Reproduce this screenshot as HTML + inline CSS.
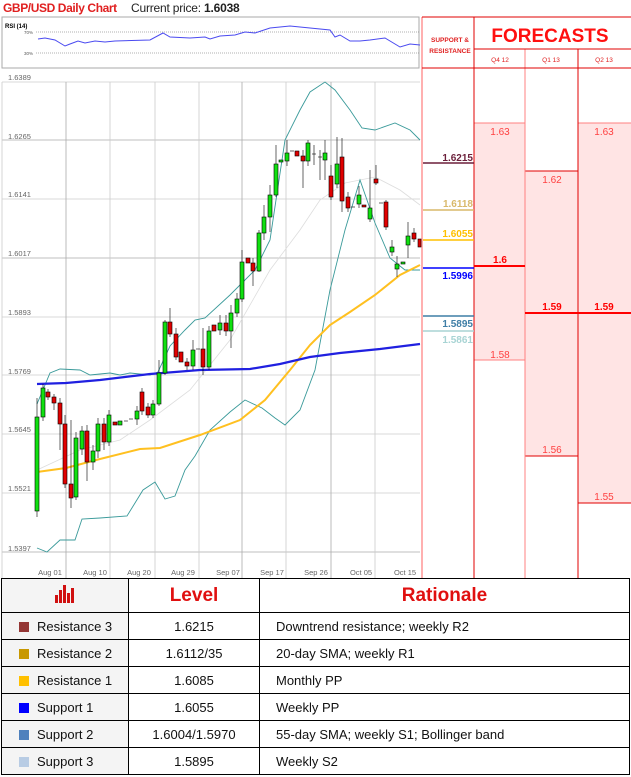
<!DOCTYPE html><html><head><meta charset="utf-8"><style>
body{margin:0;width:631px;height:777px;background:#fff;font-family:"Liberation Sans",sans-serif;overflow:hidden;position:relative}
.t{position:absolute;white-space:nowrap}
table{position:absolute;left:1px;top:578px;border-collapse:collapse;width:629px}
td{border:1.5px solid #000;font-size:13px;color:#111;height:26px;padding:0}
.sq{display:inline-block;width:10px;height:10px;margin:0 8px 0 17px;vertical-align:-1px}
.h{font-weight:bold;color:#e01010;font-size:19px;text-align:center}
</style></head><body>
<div class="t" style="left:3px;top:1px;font-size:12px;font-weight:bold;color:#e02020;letter-spacing:-0.4px">GBP/USD Daily Chart</div>
<div class="t" style="left:131px;top:1px;font-size:12px;color:#222;letter-spacing:-0.2px">Current price: <b>1.6038</b></div>
<svg width="631" height="578" style="position:absolute;left:0;top:0" font-family="Liberation Sans">
<rect x="2" y="17" width="417" height="51" fill="#fff" stroke="#aaa"/>
<text x="5" y="28" font-size="6" font-weight="bold">RSI (14)</text>
<text x="24" y="34" font-size="4.5" fill="#555">70%</text><text x="24" y="55" font-size="4.5" fill="#555">30%</text>
<line x1="36" y1="32" x2="419" y2="32" stroke="#666" stroke-dasharray="1,1" stroke-width="0.6"/>
<line x1="36" y1="53" x2="419" y2="53" stroke="#666" stroke-dasharray="1,1" stroke-width="0.6"/>
<polyline fill="none" stroke="#4a4af0" stroke-width="1" points="38,39 45,38 55,40 65,46 70,44 78,41 85,43 95,41 105,42 115,41 150,40 163,33 170,37 190,38 205,37 210,39 220,36 235,35 245,32 255,33 270,28 290,26 310,28 330,30 335,37 340,35 350,41 360,41 370,40 385,38 400,47 410,44 420,45"/>
<g font-size="7.5" fill="#666">
<text x="8" y="80">1.6389</text><text x="8" y="139">1.6265</text><text x="8" y="197">1.6141</text><text x="8" y="256">1.6017</text><text x="8" y="315">1.5893</text><text x="8" y="374">1.5769</text><text x="8" y="432">1.5645</text><text x="8" y="491">1.5521</text><text x="8" y="551">1.5397</text>
</g>
<g stroke="#ccc" stroke-width="0.8">
<line x1="2" y1="82" x2="420" y2="82"/><line x1="2" y1="140" x2="420" y2="140" stroke="#aaa"/><line x1="2" y1="199" x2="420" y2="199"/><line x1="2" y1="258" x2="420" y2="258" stroke="#aaa"/><line x1="2" y1="317" x2="420" y2="317"/><line x1="2" y1="375" x2="420" y2="375"/><line x1="2" y1="434" x2="420" y2="434"/><line x1="2" y1="493" x2="420" y2="493"/><line x1="2" y1="552" x2="420" y2="552" stroke="#aaa"/>
<line x1="66" y1="82" x2="66" y2="578" stroke="#aaa"/><line x1="110" y1="82" x2="110" y2="578"/><line x1="155" y1="82" x2="155" y2="578"/><line x1="199" y1="82" x2="199" y2="578"/><line x1="242" y1="82" x2="242" y2="578" stroke="#aaa"/><line x1="286" y1="82" x2="286" y2="578"/><line x1="331" y1="82" x2="331" y2="578" stroke="#aaa"/><line x1="375" y1="82" x2="375" y2="578"/>
<line x1="2" y1="82" x2="2" y2="578"/>
</g>
<g font-size="7.5" fill="#666" text-anchor="middle">
<text x="50" y="575">Aug 01</text><text x="95" y="575">Aug 10</text><text x="139" y="575">Aug 20</text><text x="183" y="575">Aug 29</text><text x="228" y="575">Sep 07</text><text x="272" y="575">Sep 17</text><text x="316" y="575">Sep 26</text><text x="361" y="575">Oct 05</text><text x="405" y="575">Oct 15</text>
</g>
<polyline fill="none" stroke="#ddd" stroke-width="0.8" points="37,470 80,450 120,440 150,420 190,390 230,340 270,270 300,230 320,200 345,183 375,177 400,190 420,205"/>
<polyline fill="none" stroke="#3a9a9a" stroke-width="0.9" points="37,404 50,373 60,369 80,370 90,375 110,373 120,375 130,373 150,375 158,372 170,346 185,330 195,320 205,318 230,295 255,270 270,240 285,140 300,110 310,92 325,82 335,90 350,110 362,128 375,130 395,123 410,130 420,140"/>
<polyline fill="none" stroke="#3a9a9a" stroke-width="0.9" points="37,548 47,552 60,540 75,540 82,519 100,518 127,516 143,490 155,482 165,499 175,496 185,470 195,456 210,430 230,412 245,400 262,408 275,418 285,425 300,410 315,370 330,290 345,230 360,180 375,223 390,258 405,270 420,270"/>
<polyline fill="none" stroke="#ffc020" stroke-width="2" points="37,472 66,468 100,459 140,449 160,448 200,435 240,420 265,400 290,370 310,345 330,325 350,312 375,295 400,275 420,265"/>
<polyline fill="none" stroke="#2020e0" stroke-width="2.2" points="37,384 66,383 100,380 150,374 200,370 250,369 280,364 310,357 340,353 380,349 420,344"/>
<g stroke="#000" stroke-width="0.6">
<g fill="#10e010">
<line x1="37" y1="398" x2="37" y2="517"/><rect x="35" y="417" width="4" height="94"/>
<line x1="43" y1="384" x2="43" y2="421"/><rect x="41" y="388" width="4" height="29"/>
<line x1="76" y1="432" x2="76" y2="500"/><rect x="74" y="438" width="4" height="59"/>
<line x1="82" y1="426" x2="82" y2="455"/><rect x="80" y="431" width="4" height="18"/>
<line x1="93" y1="445" x2="93" y2="470"/><rect x="91" y="451" width="4" height="11"/>
<line x1="98" y1="418" x2="98" y2="458"/><rect x="96" y="424" width="4" height="27"/>
<line x1="109" y1="410" x2="109" y2="446"/><rect x="107" y="415" width="4" height="27"/>
<rect x="118" y="421" width="4" height="4"/>
<line x1="137" y1="406" x2="137" y2="425"/><rect x="135" y="411" width="4" height="8"/>
<line x1="153" y1="400" x2="153" y2="418"/><rect x="151" y="404" width="4" height="11"/>
<line x1="159" y1="360" x2="159" y2="406"/><rect x="157" y="373" width="4" height="31"/>
<line x1="165" y1="320" x2="165" y2="375"/><rect x="163" y="322" width="4" height="51"/>
<line x1="193" y1="340" x2="193" y2="370"/><rect x="191" y="350" width="4" height="16"/>
<line x1="209" y1="326" x2="209" y2="370"/><rect x="207" y="331" width="4" height="36"/>
<line x1="220" y1="315" x2="220" y2="335"/><rect x="218" y="323" width="4" height="7"/>
<line x1="231" y1="305" x2="231" y2="348"/><rect x="229" y="313" width="4" height="18"/>
<line x1="237" y1="293" x2="237" y2="317"/><rect x="235" y="299" width="4" height="14"/>
<line x1="242" y1="250" x2="242" y2="302"/><rect x="240" y="262" width="4" height="37"/>
<line x1="259" y1="230" x2="259" y2="272"/><rect x="257" y="233" width="4" height="38"/>
<line x1="264" y1="205" x2="264" y2="240"/><rect x="262" y="217" width="4" height="16"/>
<line x1="270" y1="185" x2="270" y2="232"/><rect x="268" y="195" width="4" height="22"/>
<line x1="276" y1="145" x2="276" y2="197"/><rect x="274" y="164" width="4" height="31"/>
<rect x="279" y="160" width="4" height="2"/>
<line x1="287" y1="140" x2="287" y2="166"/><rect x="285" y="153" width="4" height="8"/>
<line x1="308" y1="140" x2="308" y2="166"/><rect x="306" y="143" width="4" height="18"/>
<line x1="325" y1="140" x2="325" y2="180"/><rect x="323" y="153" width="4" height="7"/>
<line x1="337" y1="137" x2="337" y2="188"/><rect x="335" y="164" width="4" height="20"/>
<line x1="359" y1="186" x2="359" y2="208"/><rect x="357" y="195" width="4" height="9"/>
<line x1="370" y1="170" x2="370" y2="222"/><rect x="368" y="208" width="4" height="11"/>
<line x1="392" y1="240" x2="392" y2="256"/><rect x="390" y="247" width="4" height="5"/>
<line x1="397" y1="256" x2="397" y2="277"/><rect x="395" y="264" width="4" height="5"/>
<rect x="401" y="262" width="4" height="2"/>
<line x1="408" y1="222" x2="408" y2="258"/><rect x="406" y="236" width="4" height="9"/>
</g>
<g fill="#e00000">
<line x1="48" y1="389" x2="48" y2="400"/><rect x="46" y="392" width="4" height="5"/>
<line x1="54" y1="394" x2="54" y2="410"/><rect x="52" y="397" width="4" height="6"/>
<line x1="60" y1="398" x2="60" y2="450"/><rect x="58" y="403" width="4" height="21"/>
<line x1="65" y1="415" x2="65" y2="488"/><rect x="63" y="424" width="4" height="60"/>
<line x1="71" y1="420" x2="71" y2="508"/><rect x="69" y="484" width="4" height="14"/>
<line x1="87" y1="425" x2="87" y2="481"/><rect x="85" y="431" width="4" height="31"/>
<line x1="104" y1="418" x2="104" y2="450"/><rect x="102" y="424" width="4" height="18"/>
<rect x="113" y="422" width="4" height="3"/>
<line x1="142" y1="388" x2="142" y2="415"/><rect x="140" y="392" width="4" height="19"/>
<line x1="148" y1="403" x2="148" y2="418"/><rect x="146" y="407" width="4" height="8"/>
<line x1="170" y1="308" x2="170" y2="337"/><rect x="168" y="322" width="4" height="12"/>
<line x1="176" y1="328" x2="176" y2="360"/><rect x="174" y="334" width="4" height="23"/>
<rect x="179" y="352" width="4" height="10"/>
<line x1="187" y1="358" x2="187" y2="370"/><rect x="185" y="362" width="4" height="4"/>
<line x1="203" y1="328" x2="203" y2="375"/><rect x="201" y="349" width="4" height="18"/>
<rect x="212" y="325" width="4" height="6"/>
<line x1="226" y1="315" x2="226" y2="336"/><rect x="224" y="323" width="4" height="8"/>
<rect x="246" y="258" width="4" height="5"/>
<line x1="253" y1="258" x2="253" y2="286"/><rect x="251" y="263" width="4" height="8"/>
<rect x="295" y="151" width="4" height="5"/>
<line x1="303" y1="150" x2="303" y2="188"/><rect x="301" y="156" width="4" height="5"/>
<line x1="331" y1="165" x2="331" y2="200"/><rect x="329" y="176" width="4" height="21"/>
<line x1="342" y1="138" x2="342" y2="212"/><rect x="340" y="157" width="4" height="44"/>
<line x1="348" y1="192" x2="348" y2="212"/><rect x="346" y="197" width="4" height="11"/>
<rect x="362" y="205" width="4" height="2"/>
<line x1="376" y1="165" x2="376" y2="185"/><rect x="374" y="179" width="4" height="4"/>
<line x1="386" y1="200" x2="386" y2="230"/><rect x="384" y="202" width="4" height="25"/>
<line x1="414" y1="228" x2="414" y2="242"/><rect x="412" y="233" width="4" height="6"/>
<rect x="418" y="239" width="3" height="8"/>
</g>
<g><line x1="124" y1="421" x2="128" y2="421"/><line x1="129" y1="419" x2="133" y2="419"/><line x1="196" y1="349" x2="200" y2="349"/><line x1="290" y1="151" x2="294" y2="151"/><line x1="312" y1="154" x2="316" y2="154"/><line x1="318" y1="157" x2="322" y2="157"/><line x1="351" y1="207" x2="355" y2="207"/><line x1="379" y1="203" x2="383" y2="203"/><line x1="314" y1="145" x2="314" y2="165"/><line x1="320" y1="150" x2="320" y2="180"/></g>
</g>
<rect x="474" y="123" width="51" height="237" fill="#ffe4e4"/>
<rect x="525" y="171" width="53" height="285" fill="#ffe4e4"/>
<rect x="578" y="123" width="53" height="380" fill="#ffe4e4"/>
<g stroke="#ff8080" stroke-width="1">
<line x1="474" y1="123" x2="525" y2="123"/><line x1="474" y1="360" x2="525" y2="360"/><line x1="578" y1="123" x2="631" y2="123"/>
</g>
<g stroke="#e00000" stroke-width="1">
<line x1="525" y1="171" x2="578" y2="171"/><line x1="525" y1="456" x2="578" y2="456"/><line x1="578" y1="503" x2="631" y2="503"/>
<line x1="422" y1="17" x2="422" y2="578" stroke="#ff6060"/>
<line x1="422" y1="17" x2="631" y2="17"/>
<line x1="474" y1="17" x2="474" y2="578"/><line x1="525" y1="49" x2="525" y2="578" stroke="#ff8080"/><line x1="578" y1="49" x2="578" y2="578"/>
<line x1="474" y1="49" x2="631" y2="49"/><line x1="422" y1="68" x2="631" y2="68"/>
</g>
<line x1="474" y1="266" x2="525" y2="266" stroke="#ff0000" stroke-width="2"/>
<line x1="525" y1="313" x2="631" y2="313" stroke="#ff0000" stroke-width="2"/>
<text x="450" y="42" font-size="6.5" font-weight="bold" fill="#e02020" text-anchor="middle">SUPPORT &amp;</text>
<text x="450" y="53" font-size="6.5" font-weight="bold" fill="#e02020" text-anchor="middle">RESISTANCE</text>
<text x="550" y="42" font-size="19" font-weight="bold" fill="#ff1010" text-anchor="middle">FORECASTS</text>
<g font-size="6.5" fill="#e02020" text-anchor="middle"><text x="500" y="62">Q4 12</text><text x="551" y="62">Q1 13</text><text x="604" y="62">Q2 13</text></g>
<g font-size="10" fill="#ff4040" text-anchor="middle">
<text x="500" y="135">1.63</text><text x="604" y="135">1.63</text><text x="552" y="183">1.62</text><text x="500" y="358">1.58</text><text x="552" y="453">1.56</text><text x="604" y="500">1.55</text>
</g>
<g font-size="10" font-weight="bold" fill="#ff0000" text-anchor="middle"><text x="500" y="263">1.6</text><text x="552" y="310">1.59</text><text x="604" y="310">1.59</text></g>
<line x1="423" y1="163" x2="474" y2="163" stroke="#6b1f3a" stroke-width="1.5"/>
<line x1="423" y1="210" x2="474" y2="210" stroke="#d9b96a" stroke-width="1.5"/>
<line x1="423" y1="240" x2="474" y2="240" stroke="#ffc000" stroke-width="1.5"/>
<line x1="423" y1="268" x2="474" y2="268" stroke="#0000ff" stroke-width="1.5"/>
<line x1="423" y1="316" x2="474" y2="316" stroke="#3f7ea6" stroke-width="1.5"/>
<line x1="423" y1="331" x2="474" y2="331" stroke="#a8d4d4" stroke-width="1.5"/>
<g font-size="10" font-weight="bold" text-anchor="end">
<text x="473" y="161" fill="#6b1f3a">1.6215</text><text x="473" y="207" fill="#d9b96a">1.6118</text><text x="473" y="237" fill="#ffc000">1.6055</text><text x="473" y="279" fill="#0000ff">1.5996</text><text x="473" y="327" fill="#3f7ea6">1.5895</text><text x="473" y="343" fill="#a8d4d4">1.5861</text>
</g>
</svg>
<table>
<tr style="height:34px"><td style="width:126px;text-align:center;background:#f4f4f4"><svg width="22" height="18" viewBox="0 0 22 18"><g fill="#d01010"><rect x="1" y="10" width="3" height="8"/><rect x="5" y="5" width="3" height="13"/><rect x="9" y="0" width="3" height="18"/><rect x="13" y="8" width="3" height="10"/><rect x="17" y="3" width="3" height="15"/></g></svg></td><td class="h" style="width:130px">Level</td><td class="h">Rationale</td></tr>
<tr><td style="background:#f4f4f4"><span class="sq" style="background:#943634"></span>Resistance 3</td><td style="text-align:center">1.6215</td><td style="padding-left:16px">Downtrend resistance; weekly R2</td></tr>
<tr><td style="background:#f4f4f4"><span class="sq" style="background:#c89800"></span>Resistance 2</td><td style="text-align:center">1.6112/35</td><td style="padding-left:16px">20-day SMA; weekly R1</td></tr>
<tr><td style="background:#f4f4f4"><span class="sq" style="background:#ffc000"></span>Resistance 1</td><td style="text-align:center">1.6085</td><td style="padding-left:16px">Monthly PP</td></tr>
<tr><td style="background:#f4f4f4"><span class="sq" style="background:#0000ff"></span>Support 1</td><td style="text-align:center">1.6055</td><td style="padding-left:16px">Weekly PP</td></tr>
<tr><td style="background:#f4f4f4"><span class="sq" style="background:#4f81bd"></span>Support 2</td><td style="text-align:center">1.6004/1.5970</td><td style="padding-left:16px">55-day SMA; weekly S1; Bollinger band</td></tr>
<tr><td style="background:#f4f4f4"><span class="sq" style="background:#b8cce4"></span>Support 3</td><td style="text-align:center">1.5895</td><td style="padding-left:16px">Weekly S2</td></tr>
</table>
</body></html>
